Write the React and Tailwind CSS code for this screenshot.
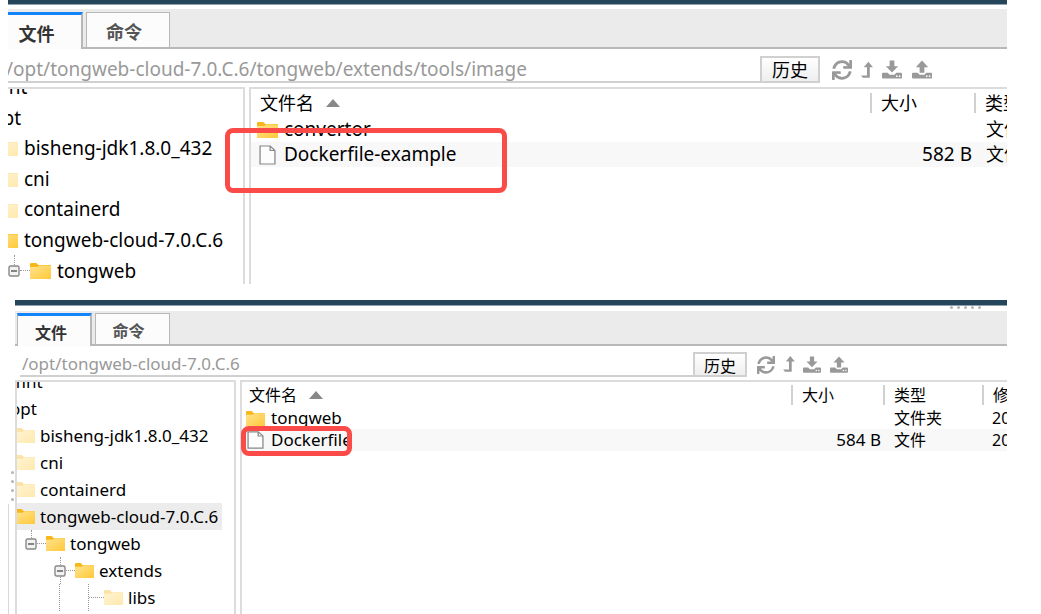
import { FaSync } from 'react-icons/fa';

export default function App() {
  return (
    <main className="flex flex-col gap-4 bg-white pl-2 pr-[34px] text-black font-['Noto_Sans','Noto_Sans_CJK_SC',sans-serif]">
      <LargePanel />
      <SmallPanel />
    </main>
  );
}

function LargePanel() {
  return (
    <section className="overflow-hidden text-[18px]">
      <div className="h-[5px] border-b border-[#8fa3ae] bg-[#25465a]" />
      <div className="mt-1 flex h-10 items-end border-b-2 border-[#b8b8b8] bg-[#ebebeb] pt-[3px]">
        <Tab active className="-mb-[2px] h-[37px] w-[75px] pt-1 pr-4">文件</Tab>
        <Tab className="ml-[3px] h-[35px] w-[84px] pt-1 pr-2">命令</Tab>
      </div>
      <div className="flex h-[38px] items-start pt-[7px]">
        <PathBox className="-ml-[2px] h-[27px] pt-[2px] text-[19px]" value="/opt/tongweb-cloud-7.0.C.6/tongweb/extends/tools/image" />
        <HistoryButton className="h-[27px] w-[60px] pt-[2px]" />
        <Actions className="ml-3 h-[27px] w-[175px] gap-[9px] text-[20px]" />
      </div>
      <div className="flex h-[197px] items-stretch gap-1">
        <div className="w-[237px] shrink-0 overflow-hidden border-t-2 border-r-2 border-[#dcdcdc] text-[19px]">
          <ul className="-mt-[17px] flex h-[214px] flex-col">
            <li className="-ml-[17px] flex flex-1 items-center">mnt</li>
            <li className="-ml-[17px] flex flex-1 items-center">opt</li>
            <TreeItem className="-ml-[10px] flex-1 gap-[6px]" faded large>bisheng-jdk1.8.0_432</TreeItem>
            <TreeItem className="-ml-[10px] flex-1 gap-[6px]" faded large>cni</TreeItem>
            <TreeItem className="-ml-[10px] flex-1 gap-[6px]" faded large>containerd</TreeItem>
            <TreeItem className="-ml-[10px] flex-1 gap-[6px]" large>tongweb-cloud-7.0.C.6</TreeItem>
            <li className="flex flex-1 items-center">
              <Toggle />
              <Dots />
              <Folder className="h-4 w-[21px]" />
              <span className="ml-[6px]">tongweb</span>
            </li>
          </ul>
        </div>
        <div className="relative min-w-0 flex-1 border-t-2 border-l-2 border-[#dcdcdc]">
          <div className="overflow-hidden">
            <table className="w-full table-fixed text-left whitespace-nowrap">
              <thead>
                <tr className="h-7">
                  <th className="pl-[9px] font-normal"><SortLabel /></th>
                  <HeaderCell className="w-[104px]">大小</HeaderCell>
                  <HeaderCell className="w-[33px]">类型</HeaderCell>
                </tr>
              </thead>
              <tbody>
                <tr className="h-[25px] leading-[25px]">
                  <NameCell className="text-[19px]" icon={<Folder className="h-4 w-[21px]" />}>convertor</NameCell>
                  <td className="p-0" />
                  <td className="overflow-hidden p-0 pl-3">文件夹</td>
                </tr>
                <tr className="h-[25px] bg-[#f8f8f8] leading-[25px]">
                  <NameCell className="text-[19px]" icon={<Sheet className="mx-[2px] h-5 w-[17px]" />}>Dockerfile-example</NameCell>
                  <td className="p-0 pr-[2px] text-right text-[19px]">582 B</td>
                  <td className="overflow-hidden p-0 pl-3">文件</td>
                </tr>
              </tbody>
            </table>
          </div>
          <div className="absolute top-[39px] -left-[26px] h-[65px] w-[282px] rounded-lg border-[5px] border-[#fa4b48]" />
        </div>
      </div>
    </section>
  );
}

function SmallPanel() {
  return (
    <section className="flex overflow-hidden text-[16px]">
      <div className="flex w-[7px] shrink-0 flex-col">
        <div className="mt-[168px] ml-[3px] flex h-9 flex-col justify-around">
          <Grip />
          <Grip />
          <Grip />
          <Grip />
        </div>
        <div className="w-px flex-1 bg-[#d8d8d8]" />
      </div>
      <div className="min-w-0 flex-1">
        <div className="h-[6px] border-b border-[#8fa3ae] bg-[#25465a]" />
        <div className="flex h-[5px] items-start justify-end gap-1 pr-[26px]">
          <Grip />
          <Grip />
          <Grip />
          <Grip />
          <Grip />
        </div>
        <div className="flex h-[35px] items-end border-b-2 border-[#b8b8b8] bg-[#ebebeb] pl-[2px]">
          <Tab active className="-mb-[2px] h-[33px] w-[75px] border-l pt-1 pr-[6px]">文件</Tab>
          <Tab className="ml-[3px] h-[31px] w-[75px] pt-1 pr-2">命令</Tab>
        </div>
        <div className="flex h-[34px] items-start pt-[6px] pl-[5px]">
          <PathBox className="h-[25px] pl-[2px] text-[17px]" value="/opt/tongweb-cloud-7.0.C.6" />
          <HistoryButton className="h-[25px] w-[54px] pt-[2px]" />
          <Actions className="ml-[10px] h-[25px] w-[250px] gap-2 text-[18px]" />
        </div>
        <div className="flex h-[234px] items-stretch gap-1">
          <div className="w-[221px] shrink-0 overflow-hidden border-x-2 border-t-2 border-[#dcdcdc] text-[17px]">
            <ul className="-mt-[14px] leading-[27px]">
              <li className="-ml-[7px] h-[27px]">mnt</li>
              <li className="-ml-[7px] h-[27px]">opt</li>
              <TreeItem className="-ml-px h-[27px] gap-[5px]" faded>bisheng-jdk1.8.0_432</TreeItem>
              <TreeItem className="-ml-px h-[27px] gap-[5px]" faded>cni</TreeItem>
              <TreeItem className="-ml-px h-[27px] gap-[5px]" faded>containerd</TreeItem>
              <TreeItem className="-ml-px mr-3 h-[27px] gap-[5px] bg-[#ececec]">tongweb-cloud-7.0.C.6</TreeItem>
              <li className="flex h-[27px] items-center pl-2">
                <Toggle />
                <Dots short />
                <Folder className="h-[15px] w-[19px]" />
                <span className="ml-[5px]">tongweb</span>
              </li>
              <li className="flex h-[27px] items-center pl-[37px]">
                <Toggle rise />
                <Dots short />
                <Folder className="h-[15px] w-[19px]" />
                <span className="ml-[5px]">extends</span>
              </li>
              <li className="flex h-[27px] items-center pl-[42px]">
                <div className="h-full w-[29px] border-l border-dotted border-[#999]" />
                <div className="h-full border-l border-dotted border-[#999]" />
                <div className="w-[15px] border-t border-dotted border-[#999]" />
                <Folder className="h-[15px] w-[19px] opacity-40" />
                <span className="ml-[5px]">libs</span>
              </li>
            </ul>
          </div>
          <div className="relative min-w-0 flex-1 border-t-2 border-l-2 border-[#dcdcdc]">
            <div className="overflow-hidden">
              <table className="w-full table-fixed text-left whitespace-nowrap">
                <thead>
                  <tr className="h-[25px]">
                    <th className="pl-[7px] font-normal"><SortLabel /></th>
                    <HeaderCell className="w-[92px]">大小</HeaderCell>
                    <HeaderCell className="w-[99px]">类型</HeaderCell>
                    <HeaderCell className="w-[25px]">修</HeaderCell>
                  </tr>
                </thead>
                <tbody>
                  <tr className="h-[22px] leading-[22px]">
                    <NameCell small className="text-[17px]" icon={<Folder className="h-[15px] w-[19px]" />}>tongweb</NameCell>
                    <td className="p-0" />
                    <td className="p-0 pl-[11px]">文件夹</td>
                    <td className="overflow-hidden p-0 pl-[10px]">20</td>
                  </tr>
                  <tr className="h-[22px] bg-[#f8f8f8] leading-[22px]">
                    <NameCell small className="text-[17px]" icon={<Sheet className="mx-[1px] h-[18px] w-[17px]" />}>Dockerfile</NameCell>
                    <td className="p-0 pr-[2px] text-right text-[17px]">584 B</td>
                    <td className="p-0 pl-[11px]">文件</td>
                    <td className="overflow-hidden p-0 pl-[10px]">20</td>
                  </tr>
                </tbody>
              </table>
            </div>
            <div className="absolute top-[44px] -left-px h-[30px] w-[111px] rounded-lg border-[5px] border-[#fa4b48]" />
          </div>
        </div>
      </div>
    </section>
  );
}

const Tab = ({ active, className, children }) => (
  <button
    className={`${className} ${active ? 'border-t-[3px] border-t-[#1484fa] border-r-2 text-[#333]' : 'border-x border-t text-[#555]'} flex shrink-0 items-center justify-center border-[#b8b8b8] bg-[#fcfcfc] font-bold`}
  >
    {children}
  </button>
);

const PathBox = ({ className, value }) => (
  <input
    aria-label="路径"
    readOnly
    value={value}
    className={`${className} min-w-0 flex-1 border-b-2 border-[#d0d0d0] text-[#999] outline-none`}
  />
);

const HistoryButton = ({ className }) => (
  <button className={`${className} flex shrink-0 items-center justify-center border-2 border-[#d0d0d0] bg-gradient-to-b from-white to-[#eee]`}>
    历史
  </button>
);

const Actions = ({ className }) => (
  <div className={`${className} flex shrink-0 items-center text-[#999]`}>
    <button aria-label="刷新"><FaSync /></button>
    <button aria-label="上级目录">
      <svg viewBox="0 0 13 18" className="h-[0.9em] w-3" fill="currentColor">
        <path d="M8 0 13 6H9.500v11.500H2L0 15h6.500V6H3z" />
      </svg>
    </button>
    <button aria-label="下载">
      <svg viewBox="0 0 21 20" className="size-[1em]" fill="currentColor">
        <path d="M8 0h5v6h4l-6.500 6.500L4 6h4z" />
        <TrayShape />
      </svg>
    </button>
    <button aria-label="上传" className="pl-px">
      <svg viewBox="0 0 21 20" className="size-[1em]" fill="currentColor">
        <path d="M8 13h5V7h4L10.500 0 4 7h4z" />
        <TrayShape />
      </svg>
    </button>
  </div>
);

// disk tray with two small lights on the right
const TrayShape = () => (
  <>
    <path d="M1 13h5l2 2h5l2-2h5q1 0 1 1v4q0 1-1 1H1q-1 0-1-1v-4q0-1 1-1z" />
    <circle cx="15.500" cy="16.500" r="0.900" fill="#fff" />
    <circle cx="18.500" cy="16.500" r="0.900" fill="#fff" />
  </>
);

const TreeItem = ({ className, faded, large, children }) => (
  <li className={`${className} flex items-center`}>
    <Folder className={`${large ? 'h-4 w-5' : 'h-[15px] w-[19px]'} ${faded ? 'opacity-40' : ''}`} />
    <span>{children}</span>
  </li>
);

const HeaderCell = ({ className, children }) => (
  <th className={`${className} p-0 font-normal`}>
    <div className="overflow-hidden border-l-2 border-[#d0d0d0] pl-[9px] leading-5">{children}</div>
  </th>
);

const NameCell = ({ className, small, icon, children }) => (
  <td className={`${className} ${small ? 'pl-1' : 'pl-[6px]'} py-0 pr-0`}>
    <div className="flex items-center gap-[6px]">
      {icon}
      {children}
    </div>
  </td>
);

const SortLabel = () => (
  <div className="flex items-center gap-3 leading-5">
    文件名
    <svg viewBox="0 0 14 8" className="h-2 w-[14px]">
      <path d="M7 0 14 8H0z" fill="#888" />
    </svg>
  </div>
);

const Toggle = ({ rise }) => (
  <div className="flex h-full shrink-0 flex-col items-center">
    <div className="flex-1 border-l border-dotted border-[#999]" />
    <svg viewBox="0 0 12 12" className="size-3">
      <rect x="1" y="1" width="10" height="10" rx="1.5" fill="#f2f2f2" stroke="#888" strokeWidth="1.4" />
      <path d="M3 6h6" stroke="#555" strokeWidth="1.4" />
    </svg>
    <div className={`${rise ? 'border-l' : ''} flex-1 border-dotted border-[#999]`} />
  </div>
);

const Dots = ({ short }) => (
  <div className={`${short ? 'w-[9px]' : 'w-[10px]'} shrink-0 border-t border-dotted border-[#999]`} />
);

const Grip = () => <div className="size-[3px] shrink-0 rounded-full bg-[#b5b5b5]" />;

const Folder = ({ className }) => (
  <svg viewBox="0 0 20 16" preserveAspectRatio="none" className={`${className} shrink-0`}>
    <defs>
      <linearGradient id="folder" x1="0" y1="0" x2="1" y2="1">
        <stop offset="0" stopColor="#ffe390" />
        <stop offset="1" stopColor="#ffc938" />
      </linearGradient>
    </defs>
    <path d="M0 1q0-1 1-1h5l2 2h12v4H0z" fill="#f8b81c" />
    <path d="M0 4h7l2-1.500h11V16H0z" fill="url(#folder)" />
  </svg>
);

const Sheet = ({ className }) => (
  <svg viewBox="0 0 16 20" preserveAspectRatio="none" className={`${className} shrink-0`}>
    <path d="M1 1h9.500L15 5.500V19H1z" fill="#fdfdfd" stroke="#888" strokeWidth="1.200" />
    <path d="M10.500 1v4.500H15" fill="none" stroke="#888" strokeWidth="1.200" />
  </svg>
);
